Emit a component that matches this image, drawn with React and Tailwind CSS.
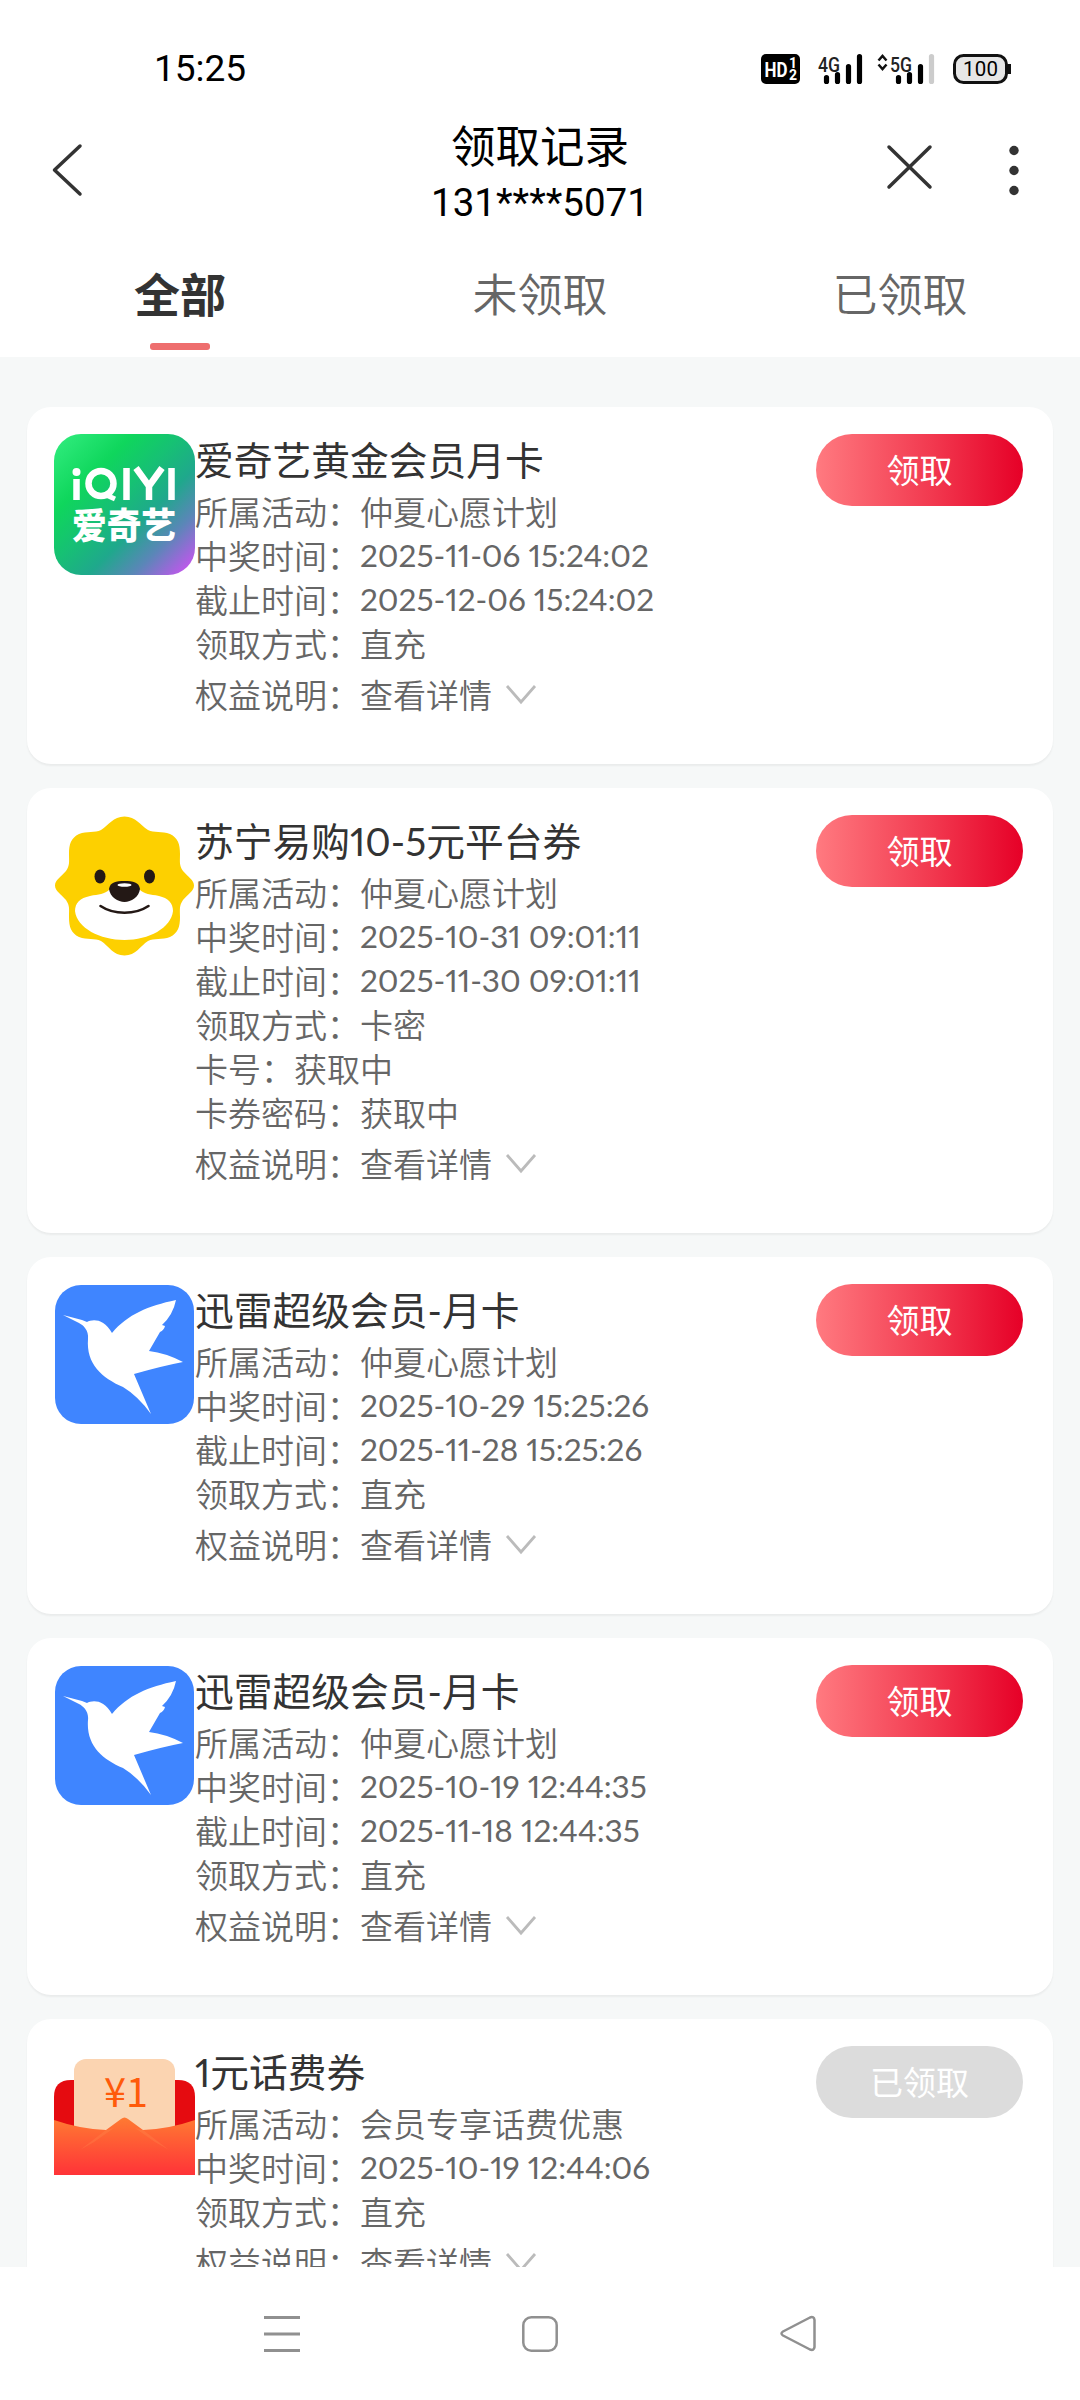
import React from "react";

const DATE = "font-['Lato','Noto_Sans_CJK_SC',sans-serif] text-[31.5px] leading-[45px] font-normal proportional-nums";

function StatusIcons() {
  return (
    <svg width="252" height="34" viewBox="760 52 252 34" className="block">
      <rect x="761" y="54" width="39" height="30" rx="5" fill="#000" />
      <g fill="#fff" fontFamily="Roboto, sans-serif" fontWeight="700">
        <text x="764.500" y="77" fontSize="21" textLength="23" lengthAdjust="spacingAndGlyphs">HD</text>
        <text x="789" y="68" fontSize="14">1</text>
        <text x="789" y="80" fontSize="14">2</text>
      </g>
      <g fill="#222" fontFamily="Roboto, sans-serif" fontWeight="500" fontSize="21">
        <text x="818" y="71.500" textLength="22" lengthAdjust="spacingAndGlyphs">4G</text>
        <text x="890" y="71.500" textLength="22" lengthAdjust="spacingAndGlyphs">5G</text>
      </g>
      <g strokeWidth="5.200" strokeLinecap="round" stroke="#000">
        <path d="M826.500 77.500V81.500M837.500 74.500V81.500M848.500 66.500V81.500M859.500 56.500V81.500" />
        <path d="M898.500 77.500V81.500M909.500 74.500V81.500M920.500 66.500V81.500" />
        <path d="M931.500 56.500V81.500" stroke="#ccc" />
      </g>
      <path d="M878.500 60.500l4-4.500 4 4.500M878.500 64.500l4 4.500 4-4.500" fill="none" stroke="#111" strokeWidth="2.500" />
      <rect x="954.500" y="55.500" width="52" height="27" rx="9" fill="#e6e6e6" stroke="#111" strokeWidth="3" />
      <path d="M1009.500 64v10" stroke="#111" strokeWidth="3" />
      <text x="963" y="76" fontFamily="Roboto, sans-serif" fontWeight="400" fontSize="20.500" textLength="35" fill="#000">100</text>
    </svg>
  );
}

function IqiyiLogo() {
  return (
    <div className="flex h-[141px] w-[141px] flex-col items-center rounded-[27px] bg-[linear-gradient(135deg,#33ee80_0%,#0fd65c_28%,#16c173_45%,#1fa88c_62%,#5b86b8_78%,#c455ee_96%)] pt-[30px] text-white">
      <svg width="107" height="90" viewBox="-1 0 107 90" className="block">
        <g fill="none" stroke="#fff" strokeWidth="6.500">
          <path d="M4.500 15V36" />
          <circle cx="29" cy="19.500" r="12.500" />
          <path d="M32 30l11 5" strokeWidth="5" />
          <path d="M54.500 4V36M99.500 4V36M64 4L77 22V36M90 4L77 22" />
        </g>
        <circle cx="4.500" cy="8" r="4" fill="#fff" />
        <text x="0" y="75" fontFamily="'Noto Sans CJK SC', sans-serif" fontWeight="900" fontSize="36" textLength="104" lengthAdjust="spacingAndGlyphs" fill="#fff">爱奇艺</text>
      </svg>
    </div>
  );
}

function SuningLogo() {
  return (
    <svg width="141" height="141" viewBox="0 0 141 141" className="block">
      <path d="M70.500 1.500C82 1.500 86 10 94 15C100 18 108 16 116 19C124 23 126 29 126 39C126 47 125 50 129 56C134 62 140 65 140 70.500C140 76 134 79 129 85C125 91 126 94 126 102C126 112 124 118 116 122C108 125 100 123 94 126C86 131 82 140.500 70.500 140.500C59 140.500 55 131 47 126C41 123 33 125 25 122C17 118 15 112 15 102C15 94 16 91 12 85C7 79 1 76 1 70.500C1 65 7 62 12 56C16 50 15 47 15 39C15 29 17 23 25 19C33 16 41 18 47 15C55 10 59 1.500 70.500 1.500Z" fill="#fdd000" />
      <path d="M56 74C50 80 45 79 36 81C26 83 21 88 21 96C23 113 46 125 70.500 125C95 125 117 113 119 96C119 88 114 83 105 81C96 79 91 80 85 74Z" fill="#fff" />
      <ellipse cx="46" cy="61.500" rx="5.500" ry="7" fill="#231815" />
      <ellipse cx="95.500" cy="61.500" rx="5.500" ry="7" fill="#231815" />
      <path d="M55 74C56 67 62 66 70.500 66S85 67 86 74C85 82 77 87 70.500 87S56 82 55 74Z" fill="#231815" />
      <ellipse cx="70.500" cy="70" rx="7" ry="1.800" fill="#fff" />
      <path d="M46.500 91C60 100 81 100 94.500 91" fill="none" stroke="#231815" strokeWidth="2.600" strokeLinecap="round" />
    </svg>
  );
}

function XunleiLogo() {
  return (
    <svg width="141" height="141" viewBox="0 0 141 141" className="block">
      <rect x="1" y="1" width="139" height="139" rx="26" fill="#3f85ff" />
      <path d="M9 31L28 36L33 38C38 35 50 34 58 49C74 30 94 22 122 16Q119 31 108 41L111 42Q110 46 106 48L95 67Q112 69 129 78Q108 82 80 90L97 130Q84 112 69 103C48 94 32 80 34 55C35 46 29 41 25 39Z" fill="#fff" />
    </svg>
  );
}

function EnvelopeLogo() {
  return (
    <svg width="141" height="141" viewBox="0 0 141 141" className="block">
      <defs>
        <linearGradient id="envelope" x1="0" y1="0" x2="0" y2="1">
          <stop offset="0" stopColor="#ff7a32" />
          <stop offset="1" stopColor="#ff3338" />
        </linearGradient>
      </defs>
      <path d="M0 95V51Q0 34 17 34H124Q141 34 141 51V95Z" fill="#e50b10" />
      <rect x="20" y="13" width="101" height="100" rx="12" fill="#fbd4b1" />
      <path d="M0 74Q26 83 52 84L67 73Q70.500 70 74 73L89 84Q115 83 141 74V129H0Z" fill="url(#envelope)" />
      <path d="M26 104L52 84L60 82L40 96ZM115 104L89 84L81 82L101 96Z" fill="#ff8a50" opacity=".3" />
      <text x="50" y="61" fontFamily="'Noto Sans CJK SC', sans-serif" fontSize="41" textLength="44" lengthAdjust="spacingAndGlyphs" fill="#ff5a0a">¥1</text>
    </svg>
  );
}

const logos = { iqiyi: IqiyiLogo, suning: SuningLogo, xunlei: XunleiLogo, envelope: EnvelopeLogo };

const records = [
  {
    logo: "iqiyi",
    title: "爱奇艺黄金会员月卡",
    rows: [["所属活动", "仲夏心愿计划"], ["中奖时间", "2025-11-06 15:24:02"], ["截止时间", "2025-12-06 15:24:02"], ["领取方式", "直充"]],
  },
  {
    logo: "suning",
    title: "苏宁易购10-5元平台券",
    rows: [["所属活动", "仲夏心愿计划"], ["中奖时间", "2025-10-31 09:01:11"], ["截止时间", "2025-11-30 09:01:11"], ["领取方式", "卡密"], ["卡号", "获取中"], ["卡券密码", "获取中"]],
  },
  {
    logo: "xunlei",
    title: "迅雷超级会员-月卡",
    rows: [["所属活动", "仲夏心愿计划"], ["中奖时间", "2025-10-29 15:25:26"], ["截止时间", "2025-11-28 15:25:26"], ["领取方式", "直充"]],
  },
  {
    logo: "xunlei",
    title: "迅雷超级会员-月卡",
    rows: [["所属活动", "仲夏心愿计划"], ["中奖时间", "2025-10-19 12:44:35"], ["截止时间", "2025-11-18 12:44:35"], ["领取方式", "直充"]],
  },
  {
    logo: "envelope",
    title: "1元话费券",
    claimed: true,
    rows: [["所属活动", "会员专享话费优惠"], ["中奖时间", "2025-10-19 12:44:06"], ["领取方式", "直充"]],
  },
];

function RecordCard({ record }) {
  const Logo = logos[record.logo];
  return (
    <article className="flex shrink-0 items-start rounded-[24px] bg-white pt-[27px] pr-[30px] pb-[45px] pl-[27px] shadow-[0_2px_2px_rgba(0,0,0,0.05)]">
      <Logo />
      <div className="flex-1 text-[33px] leading-[44px] font-[350] whitespace-nowrap text-[#666]">
        <h2 className="h-[55px] font-['Lato','Noto_Sans_CJK_SC',sans-serif] text-[38.75px] leading-[53px] font-normal text-[#333] proportional-nums">{record.title}</h2>
        {record.rows.map(([label, value]) => (
          <div key={label} className="flex h-[44px]">
            <span>{label}：</span>
            <span className={/^\d/.test(value) ? DATE : ""}>{value}</span>
          </div>
        ))}
        <div className="mt-[8px] flex h-[46px] items-center">
          <span className="pb-[4px]">权益说明：查看详情</span>
          <svg width="32" height="20" viewBox="0 0 32 20" className="mb-[2px] ml-[13px] block" fill="none" stroke="#bbb" strokeWidth="2.800">
            <path d="M2 1L16 17L30 1" />
          </svg>
        </div>
      </div>
      {record.claimed ? (
        <button className="h-[72px] w-[207px] rounded-full bg-[#dcdcdc] pb-px text-[33px] leading-[71px] text-white">已领取</button>
      ) : (
        <button className="h-[72px] w-[207px] rounded-full bg-[linear-gradient(90deg,#ff7a80,#f23a50_55%,#e60027)] pb-px text-[33px] leading-[71px] text-white">领取</button>
      )}
    </article>
  );
}

export default function App() {
  return (
    <div className="flex h-[2400px] w-[1080px] flex-col overflow-hidden bg-white font-['Noto_Sans_CJK_SC',sans-serif]">
      <div className="flex h-[102px] shrink-0 items-end justify-between pr-[68px] pb-4 pl-[154px]">
        <span className="font-['Roboto',sans-serif] text-[37px] leading-[34px] font-normal text-black">15:25</span>
        <StatusIcons />
      </div>

      <header className="flex h-[136px] shrink-0 justify-between">
        <svg width="380" height="136" viewBox="0 102 380 136" fill="none" stroke="#333" strokeWidth="3.500" strokeLinecap="round" strokeLinejoin="round">
          <path d="M80 146L54.500 170L80 194" />
        </svg>
        <div className="flex w-[320px] flex-col items-center pt-[15px] text-black">
          <h1 className="text-[44.500px] leading-[54px]">领取记录</h1>
          <p className="font-['Roboto',sans-serif] text-[38.500px] leading-[63px] font-normal">131****5071</p>
        </div>
        <svg width="380" height="136" viewBox="700 102 380 136" fill="none" stroke="#333" strokeWidth="3.500" strokeLinecap="round">
          <path d="M889 147L930 187M930 147L889 187" />
          <g fill="#333" stroke="none">
            <circle cx="1014" cy="150.500" r="4.700" />
            <circle cx="1014" cy="170.500" r="4.700" />
            <circle cx="1014" cy="190.500" r="4.700" />
          </g>
        </svg>
      </header>

      <nav className="grid h-[119px] shrink-0 grid-cols-3 text-center text-[45px] leading-[60px] text-[#666]">
        <div className="flex flex-col items-center pt-[24px] text-[46px] font-bold text-[#333]">
          全部
          <span className="mt-[21px] h-[7px] w-[60px] rounded-[3px] bg-[#ee6e6e]" />
        </div>
        <div className="pt-[25px] font-[350]">未领取</div>
        <div className="pt-[25px] font-[350]">已领取</div>
      </nav>

      <main className="flex h-[1910px] shrink-0 flex-col gap-[24px] overflow-hidden bg-[#f6f8f8] px-[27px] pt-[50px]">
        {records.map((record, index) => (
          <RecordCard key={index} record={record} />
        ))}
      </main>

      <footer className="flex h-[133px] shrink-0 items-start justify-between bg-white px-[263px] pt-[48px]">
        <svg width="38" height="38" viewBox="0 0 38 38" fill="none" stroke="#909090" strokeWidth="3">
          <path d="M1 2.500H37M1 19H37M1 35.500H37" />
        </svg>
        <svg width="38" height="38" viewBox="0 0 38 38" fill="none" stroke="#909090" strokeWidth="2.500">
          <rect x="2.300" y="2.300" width="33.400" height="33.400" rx="8" />
        </svg>
        <svg width="38" height="38" viewBox="0 0 38 38" fill="none" stroke="#909090" strokeWidth="2.500" strokeLinejoin="round">
          <path d="M4 16.500L31 2.500Q35 1 35.500 5V32Q35 36 31 34.500L4 20.500Q1 18.500 4 16.500Z" />
        </svg>
      </footer>
    </div>
  );
}
